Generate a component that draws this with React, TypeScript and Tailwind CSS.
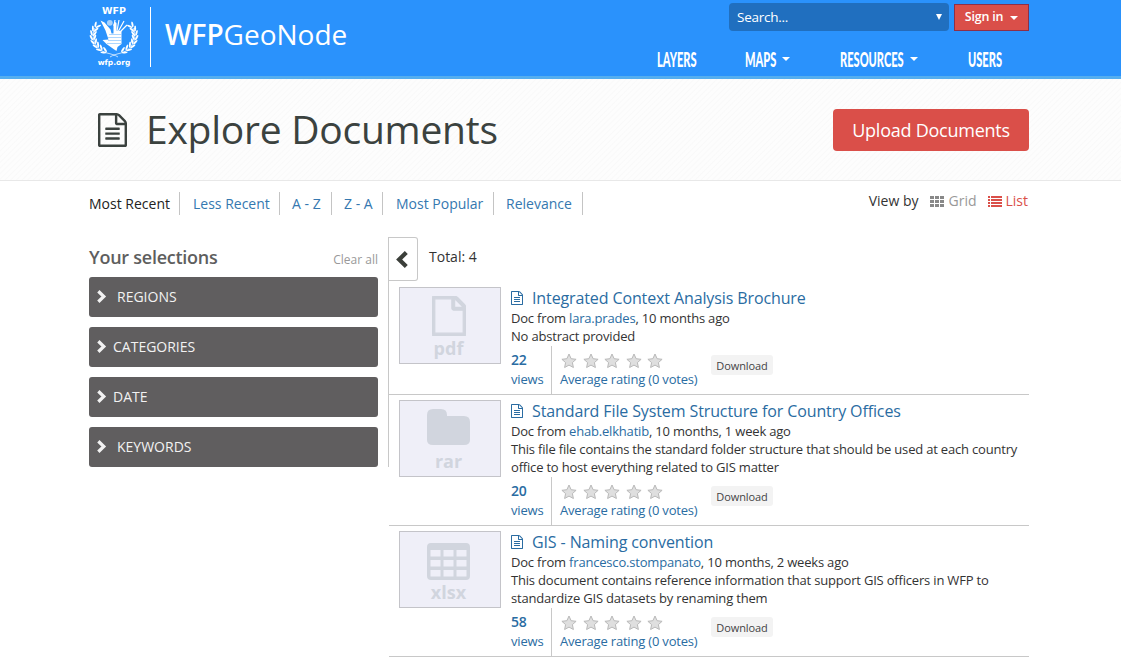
import React from "react";

const FILE_TEXT =
  "M1468 380q28 28 48 76t20 88v1152q0 40-28 68t-68 28h-1344q-40 0-68-28t-28-68v-1600q0-40 28-68t68-28h896q40 0 88 20t76 48zm-444-244v376h376q-10-29-22-41l-313-313q-12-12-41-22zm384 1528v-1024h-416q-40 0-68-28t-28-68v-416h-768v1536h1280z";
const FILE_LINES =
  "M384 800q0-14 9-23t23-9h704q14 0 23 9t9 23v64q0 14-9 23t-23 9h-704q-14 0-23-9t-9-23v-64zm736 224q14 0 23 9t9 23v64q0 14-9 23t-23 9h-704q-14 0-23-9t-9-23v-64q0-14 9-23t23-9h704zm0 256q14 0 23 9t9 23v64q0 14-9 23t-23 9h-704q-14 0-23-9t-9-23v-64q0-14 9-23t23-9h704z";

function FileIcon({ className, lines = true, heavy = "" }: { className: string; lines?: boolean; heavy?: string }) {
  return (
    <svg viewBox="0 0 1536 1792" preserveAspectRatio="none" className={className} fill="currentColor" stroke={heavy ? "currentColor" : "none"} strokeWidth={heavy || 0}>
      <path d={FILE_TEXT} />
      {lines && <path d={FILE_LINES} />}
    </svg>
  );
}

function Chevron({ className, left = false }: { className: string; left?: boolean }) {
  return (
    <svg viewBox="0 0 12 16" className={className} fill="none" stroke="currentColor" strokeWidth="4">
      <path d={left ? "M10.500 1.500 3.800 8l6.700 6.500" : "M1.500 1.500 8.200 8l-6.700 6.500"} />
    </svg>
  );
}

function Caret() {
  return <span className="block h-0 w-0 border-x-4 border-t-4 border-x-transparent border-t-white" />;
}

const LEAVES = [218, 204, 190, 176, 162, 148, 134, 120];

function Branch() {
  return (
    <g>
      <path d="M6 12C1 22 7 34 18 37c4 1 8 2 11 4" fill="none" stroke="#fff" strokeWidth="0.7" />
      {LEAVES.map((deg) => {
        const t = (deg * Math.PI) / 180;
        const x = 25 + 21 * Math.cos(t);
        const y = 19.5 + 17.5 * Math.sin(t);
        return (
          <g key={deg} transform={`translate(${x} ${y}) rotate(${deg + 90})`} fill="#fff">
            <ellipse cx="0" cy="-1.9" rx="3" ry="1" transform="rotate(-26)" />
            <ellipse cx="0" cy="1.9" rx="3" ry="1" transform="rotate(26)" />
          </g>
        );
      })}
    </g>
  );
}

function Emblem() {
  return (
    <svg viewBox="0 0 50 42" className="h-[42px] w-[50px]">
      <Branch />
      <g transform="translate(50 0) scale(-1 1)">
        <Branch />
      </g>
      <path d="M11.500 4.500l4 2 6 7 1 4h2V8l2-2 1 1v8h5v13l-4 3-1 4-3-2-7-5-4-4 6-.5-3-9z" fill="#fff" />
      <circle cx="20.800" cy="6.800" r="2.900" fill="#a9d3fd" />
      <path d="M28 15l2-11M29 16l6-11M30 17l8-8M25 10l1-6" stroke="#fff" strokeWidth="1.200" />
      <path d="M20 18.500h13M19 21.500h14M19 24.500h14M18 27.500h14" stroke="#8ac4fd" strokeWidth="0.700" />
    </svg>
  );
}

function Star() {
  return (
    <svg viewBox="0 0 16 16" className="h-4 w-4">
      <path
        d="M8 1l2.100 4.700 5 .6-3.700 3.300 1 4.900L8 12.100l-4.400 2.400 1-4.900L.9 6.300l5-.6z"
        fill="#dfdfdf"
        stroke="#b9b9b9"
        strokeWidth="1"
      />
    </svg>
  );
}

function Thumb({ kind }: { kind: string }) {
  return (
    <div className="flex h-[77px] w-[102px] shrink-0 flex-col items-center border border-[#c4c4c9] bg-[#efeff8] pr-[3px] text-[#d1d5de]">
      <div className="mt-2 flex h-[40px] items-start justify-center">
        {kind === "pdf" && <FileIcon className="h-[40px] w-[34px]" lines={false} heavy="50" />}
        {kind === "rar" && (
          <svg viewBox="0 0 43 37" className="h-[37px] w-[43px]" fill="currentColor">
            <path d="M0 6q0-6 6-6h8q6 0 6 6v1h17q6 0 6 6v18q0 5-6 5H6q-6 0-6-5z" />
          </svg>
        )}
        {kind === "xlsx" && (
          <svg viewBox="0 0 43 37" className="mt-[3px] h-[37px] w-[43px]" fill="currentColor">
            <path
              fillRule="evenodd"
              d="M4 0h35q4 0 4 4v29q0 4-4 4H4q-4 0-4-4V4q0-4 4-4zM3.500 7v6.500h10V7zm13 0v6.500h10V7zm13 0v6.500h10V7zM3.500 17v6.500h10V17zm13 0v6.500h10V17zm13 0v6.500h10V17zM3.500 27v6.500h10V27zm13 0v6.500h10V27zm13 0v6.500h10V27z"
            />
          </svg>
        )}
      </div>
      <span className="text-[18px] leading-[24px] font-bold">{kind}</span>
    </div>
  );
}

type Doc = { kind: string; title: string; owner: string; age: string; text: string[]; views: number };

const DOCS: Doc[] = [
  { kind: "pdf", title: "Integrated Context Analysis Brochure", owner: "lara.prades", age: "10 months ago", text: ["No abstract provided"], views: 22 },
  {
    kind: "rar",
    title: "Standard File System Structure for Country Offices",
    owner: "ehab.elkhatib",
    age: "10 months, 1 week ago",
    text: ["This file file contains the standard folder structure that should be used at each country", "office to host everything related to GIS matter"],
    views: 20,
  },
  {
    kind: "xlsx",
    title: "GIS - Naming convention",
    owner: "francesco.stompanato",
    age: "10 months, 2 weeks ago",
    text: ["This document contains reference information that support GIS officers in WFP to", "standardize GIS datasets by renaming them"],
    views: 58,
  },
];

function DocItem({ doc }: { doc: Doc }) {
  return (
    <article className="flex border-b border-[#c8c8c8] pt-[5px] pl-[10px]">
      <Thumb kind={doc.kind} />
      <div className="ml-[10px] flex-1 text-[13px] leading-[18px] tracking-[-0.19px] whitespace-nowrap">
        <h4 className="flex h-[22px] items-center text-[16px] tracking-[-0.115px] text-[#2a6ca2]">
          <FileIcon className="mr-[9px] h-[14px] w-[12px]" />
          {doc.title}
        </h4>
        <p>
          Doc from <a className="text-[#2a6ca2]">{doc.owner}</a>, {doc.age}
        </p>
        {doc.text.map((line) => (
          <p key={line}>{line}</p>
        ))}
        <div className="flex h-[49px] pt-px text-[#2a6ca2]">
          <div className="w-[41px] border-r border-[#c8c8c8] pt-[4px] leading-[20px]">
            <b className="block h-[19px] text-[14px] leading-[19px] font-semibold">{doc.views}</b>
            views
          </div>
          <div className="w-[151px] pt-[7px] pl-[8px]">
            <div className="flex h-[17px] gap-[5.6px] pl-px">
              {[0, 1, 2, 3, 4].map((i) => (
                <Star key={i} />
              ))}
            </div>
            Average rating (0 votes)
          </div>
          <div className="mt-[9px] ml-[8px] flex h-5 w-[62px] items-center justify-center rounded-[3px] bg-[#f3f3f3] pt-px text-[11px] tracking-[-0.1px] text-[#444]">
            Download
          </div>
        </div>
      </div>
    </article>
  );
}

const SORTS = [
  { label: "Most Recent", cell: "w-[91px]" },
  { label: "Less Recent", cell: "w-[100px] pl-[13px]" },
  { label: "A - Z", cell: "w-[52px] pl-[12px]" },
  { label: "Z - A", cell: "w-[51px] pl-[12px]" },
  { label: "Most Popular", cell: "w-[111px] pl-[13px]" },
  { label: "Relevance", cell: "w-[89px] pl-[12px]" },
];

const FILTERS = [
  { label: "REGIONS", gap: "ml-[10px]" },
  { label: "CATEGORIES", gap: "ml-[6px]" },
  { label: "DATE", gap: "ml-[6px]" },
  { label: "KEYWORDS", gap: "ml-[10px]" },
];

function NavLabel({ children, box }: { children: string; box: string }) {
  return (
    <span className={`block h-6 ${box}`}>
      <span className="inline-block origin-left scale-x-[0.54] font-['Lato'] text-[20.500px] leading-6 font-black">{children}</span>
    </span>
  );
}

export default function App() {
  return (
    <div className="h-[657px] overflow-hidden bg-white font-['Open_Sans','Noto_Sans',sans-serif] text-[#333]">
      <header className="h-[79px] border-b-[3px] border-[#55aeef] bg-[#2a92fc] text-white">
        <div className="mx-auto flex w-[943px] justify-between pr-[3px]">
          <div className="flex">
            <div className="flex w-[50px] flex-col items-center">
              <span className="mt-[5px] h-[11px] font-['DejaVu_Sans'] text-[9.500px] leading-[11px] font-bold">WFP</span>
              <Emblem />
              <span className="font-['DejaVu_Sans'] text-[7.500px] leading-[10px] font-bold">wfp.org</span>
            </div>
            <div className="mt-[7px] ml-[11px] h-[60px] w-px bg-white" />
            <div className="mt-[13px] ml-[14px] text-[28px] leading-[42px]">
              <b className="font-semibold">WFP</b>GeoNode
            </div>
          </div>
          <div className="flex flex-col items-end">
            <div className="mt-[3px] flex gap-[5px]">
              <div className="flex h-7 w-[220px] items-center justify-between rounded bg-[#206fbf] pr-[5px] pl-[8px] text-[13.500px] tracking-[-0.25px]">
                Search...
                <span className="mr-[2px] h-0 w-0 border-x-[3.5px] border-t-[6px] border-x-transparent border-t-white" />
              </div>
              <div className="mt-px flex h-[27px] w-[75px] items-center justify-center gap-[7px] border border-[#8e2f48] bg-[#da4f49] text-[12.500px] font-semibold tracking-[-0.2px]">
                Sign in <Caret />
              </div>
            </div>
            <nav className="mt-[16px] flex w-[372px] items-center">
              <NavLabel box="w-[88px]">LAYERS</NavLabel>
              <NavLabel box="w-[37px]">MAPS</NavLabel>
              <span className="w-[58px]"><Caret /></span>
              <NavLabel box="w-[70px]">RESOURCES</NavLabel>
              <span className="w-[58px]"><Caret /></span>
              <NavLabel box="w-[37px]">USERS</NavLabel>
            </nav>
          </div>
        </div>
      </header>

      <section className="h-[102px] border-b border-[#e8e8e8] bg-[repeating-linear-gradient(135deg,#fdfdfd_0px,#fdfdfd_2px,#f9f9f9_3px,#fdfdfd_4px)]">
        <div className="mx-auto flex w-[943px] items-start justify-between pr-[3px] pl-[9px]">
          <h1 className="mt-[19px] flex items-center text-[39px] leading-[62px] tracking-[-0.25px] text-[#3b423f]">
            <FileIcon className="mt-[2px] mr-[19px] h-[34px] w-[29px]" />
            Explore Documents
          </h1>
          <div className="mt-[30px] flex h-[42px] w-[196px] items-center justify-center rounded bg-[#da4f49] text-[18px] tracking-[-0.25px] text-white">
            Upload Documents
          </div>
        </div>
      </section>

      <main className="mx-auto w-[943px] pr-[3px]">
        <div className="flex justify-between text-[14px]">
          <div className="mt-[11px] flex h-[23px]">
            {SORTS.map((s, i) => (
              <div
                key={s.label}
                className={`border-r border-[#c4c4c4] leading-[23px] whitespace-nowrap ${s.cell} ${i === 0 ? "text-[#222]" : "text-[#3578b0]"}`}
              >
                {s.label}
              </div>
            ))}
          </div>
          <div className="mt-[9px] mr-px flex h-[22px] items-center leading-[22px]">
            <span>View by</span>
            <svg viewBox="0 0 14 11" className="mr-[4px] ml-[12px] h-[11px] w-[14px]" fill="#888">
              <path d="M0 0h4v3H0zM5 0h4v3H5zM10 0h4v3h-4zM0 4h4v3H0zM5 4h4v3H5zM10 4h4v3h-4zM0 8h4v3H0zM5 8h4v3H5zM10 8h4v3h-4z" />
            </svg>
            <span className="text-[#999]">Grid</span>
            <svg viewBox="0 0 14 11" className="mr-[3px] ml-[12px] h-[11px] w-[14px]" fill="#da4f49">
              <path d="M0 0h2v2H0zM3 0h11v2H3zM0 3h2v2H0zM3 3h11v2H3zM0 6h2v2H0zM3 6h11v2H3zM0 9h2v2H0zM3 9h11v2H3z" />
            </svg>
            <span className="text-[#da4f49]">List</span>
          </div>
        </div>

        <div className="mt-[22px] flex items-start">
          <aside className="h-[230px] w-[300px] border-r border-[#c8c8c8] pr-[10px]">
            <div className="flex h-10 items-center justify-between">
              <h2 className="text-[18px] font-semibold tracking-[-0.25px] text-[#5e5e5e]">Your selections</h2>
              <span className="mt-[5px] text-[12px] text-[#999]">Clear all</span>
            </div>
            <div className="flex flex-col gap-[10px]">
              {FILTERS.map((f) => (
                <div key={f.label} className="flex h-10 items-center rounded-[3px] bg-[#605e5f] pb-[2px] pl-[8px] text-[14px] text-[#f2f2f2]">
                  <Chevron className="h-[13px] w-[10px]" />
                  <span className={f.gap}>{f.label}</span>
                </div>
              ))}
            </div>
          </aside>
          <div className="w-[640px]">
            <div className="flex h-[45px]">
              <div className="flex h-[44px] w-[29px] items-center justify-center rounded-r-[3px] border border-l-0 border-[#c8c8c8] text-[#3b3f3a]">
                <Chevron left className="mr-[3px] h-[17px] w-[13px]" />
              </div>
              <span className="ml-[11px] text-[14px] leading-[40px]">Total: 4</span>
            </div>
            {DOCS.map((d) => (
              <DocItem key={d.title} doc={d} />
            ))}
          </div>
        </div>
      </main>
    </div>
  );
}
